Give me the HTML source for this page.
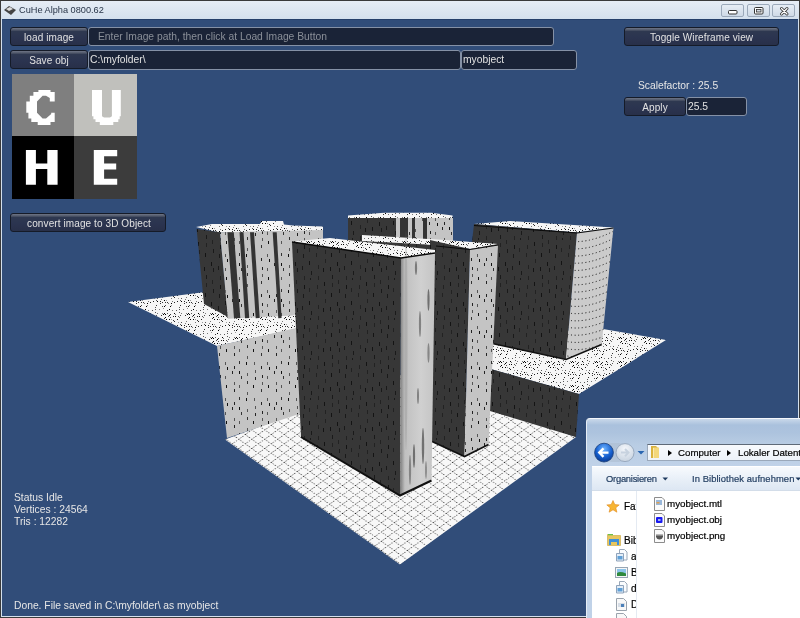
<!DOCTYPE html>
<html><head><meta charset="utf-8">
<style>
html,body{margin:0;padding:0;}
body{width:800px;height:618px;overflow:hidden;position:relative;background:#dfe7f1;font-family:"Liberation Sans",sans-serif;}
.abs{position:absolute;will-change:transform;}
#frame{left:0;top:0;width:798px;height:616px;border:1px solid #3a3a3a;background:linear-gradient(#e6edf5 0,#d4e0ed 18px,#d4e0ed 100%);}
#client{left:2px;top:19px;width:796px;height:597px;background:#314d79;border-top:1px solid #25406a;box-sizing:border-box;}
#title{left:19px;top:5px;font-size:9.2px;color:#283548;}
.cbtn{top:4px;width:23px;height:13px;border:1px solid #9ba9ba;border-radius:2px;background:linear-gradient(#e6edf5,#cfdae7);box-sizing:border-box;}
.btn{border:1px solid #151b28;border-radius:3px;background:linear-gradient(#6f7586 0,#50586a 2px,#2e3850 3.5px,#2b3450 55%,#283049 100%);box-sizing:border-box;color:#e2e2e2;font-size:10px;letter-spacing:0.1px;text-align:center;line-height:17px;padding-top:0.5px;}
.fld{border:1px solid #8591a6;border-radius:3px;background:#1a2337;box-sizing:border-box;color:#e2e2e2;font-size:10.3px;line-height:17px;padding-left:1px;}
.lbl{color:#e6e6e6;font-size:10.3px;white-space:nowrap;}
</style></head><body>
<div id="frame" class="abs"></div>
<div id="client" class="abs"></div>
<!-- title bar -->
<svg class="abs" style="left:3px;top:5px" width="14" height="11" viewBox="0 0 14 11"><path d="M1 5 L6 1 L13 5 L8 10 Z" fill="#444"/><path d="M3 4 L7 2 L10 4 L6 6Z" fill="#ddd"/></svg>
<div id="title" class="abs">CuHe Alpha 0800.62</div>
<div class="abs cbtn" style="left:721px"></div>
<div class="abs cbtn" style="left:747px"></div>
<div class="abs cbtn" style="left:772px"></div>
<svg class="abs" style="left:720px;top:3px" width="80" height="14" viewBox="0 0 80 14">
<rect x="8.5" y="7.5" width="8.5" height="3.5" rx="1" fill="#fff" stroke="#333" stroke-width="1"/>
<rect x="34.5" y="4.5" width="8.5" height="6.5" rx="1" fill="#fff" stroke="#333" stroke-width="1"/><rect x="36.5" y="6.5" width="4.5" height="2.5" fill="#d0d8e2" stroke="#333" stroke-width="0.8"/>
<path d="M61.5 5.5 L67 11 M67 5.5 L61.5 11" stroke="#3a3a3a" stroke-width="3" stroke-linecap="round"/>
<path d="M61.5 5.5 L67 11 M67 5.5 L61.5 11" stroke="#fff" stroke-width="1.2" stroke-linecap="round"/>
</svg>

<!-- UI -->
<div class="abs btn" style="left:10px;top:27px;width:78px;height:19px">load image</div>
<div class="abs fld" style="left:88px;top:27px;width:466px;height:19px;color:#8a8f98;padding-left:9px">Enter Image path, then click at Load Image Button</div>
<div class="abs btn" style="left:10px;top:50px;width:78px;height:19px">Save obj</div>
<div class="abs fld" style="left:88px;top:50px;width:373px;height:20px">C:\myfolder\</div>
<div class="abs fld" style="left:461px;top:50px;width:116px;height:20px">myobject</div>
<div class="abs btn" style="left:624px;top:27px;width:155px;height:19px">Toggle Wireframe view</div>
<div class="abs lbl" style="left:638px;top:80px">Scalefactor : 25.5</div>
<div class="abs btn" style="left:624px;top:97px;width:62px;height:19px">Apply</div>
<div class="abs fld" style="left:686px;top:97px;width:61px;height:19px">25.5</div>
<div class="abs btn" style="left:10px;top:213px;width:156px;height:19px;padding-left:2px">convert image to 3D Object</div>

<div class="abs lbl" style="left:14px;top:492px">Status Idle</div>
<div class="abs lbl" style="left:14px;top:504px">Vertices : 24564</div>
<div class="abs lbl" style="left:14px;top:515.5px">Tris : 12282</div>
<div class="abs lbl" style="left:14px;top:599.5px">Done. File saved in C:\myfolder\ as myobject</div>

<!-- logo -->
<svg class="abs" style="left:12px;top:74px" width="125" height="125" viewBox="0 0 125 125">
<rect x="0" y="0" width="62" height="62" fill="#7f7f7f"/>
<rect x="62" y="0" width="63" height="62" fill="#c0c0bc"/>
<rect x="0" y="62" width="62" height="63" fill="#000"/>
<rect x="62" y="62" width="63" height="63" fill="#3c3c3c"/>
<g fill="#fff">
<path d="M26.4 16.0 L38.5 16.0 L38.5 18.0 L42.7 18.0 L42.7 27.4 L37.8 27.4 L37.8 24.0 L34.0 21.7 L30.6 21.7 L25.0 27.4 L25.0 38.8 L30.6 44.5 L34.0 44.5 L39.2 40.0 L39.2 38.8 L42.7 38.8 L42.7 48.0 L38.5 48.0 L38.5 50.9 L25.7 50.9 L25.7 48.0 L19.3 48.0 L19.3 44.5 L16.4 44.5 L16.4 38.8 L14.3 38.8 L14.3 27.4 L17.8 27.4 L17.8 21.7 L21.4 21.7 L21.4 18.0 L26.4 18.0Z"/>
<path d="M80.0 16.0 L90.0 16.0 L90.0 42.3 L92.0 43.4 L98.0 43.4 L99.9 42.3 L99.9 16.0 L108.8 16.0 L108.8 42.3 L107.7 42.3 L107.7 45.2 L106.3 45.2 L106.3 48.0 L101.3 48.0 L101.3 50.9 L87.8 50.9 L87.8 48.0 L83.5 48.0 L83.5 45.2 L81.4 45.2 L81.4 42.3 L80.0 42.3Z"/>
<path d="M13.9 75.9 L23.9 75.9 L23.9 89.4 L35.3 89.4 L35.3 75.9 L45.6 75.9 L45.6 110.8 L35.3 110.8 L35.3 95.1 L23.9 95.1 L23.9 110.8 L13.9 110.8Z"/>
<path d="M81.8 75.9 L105.2 75.9 L105.2 82.3 L92.1 82.3 L92.1 89.4 L104.2 89.4 L104.2 95.5 L92.1 95.5 L92.1 104.7 L105.2 104.7 L105.2 110.8 L81.8 110.8Z"/>
</g>
</svg>

<!-- 3D scene -->
<svg id="scene" class="abs" style="left:0;top:0" width="800" height="618" viewBox="0 0 800 618"><defs>
<pattern id="ptop" width="24" height="24" patternUnits="userSpaceOnUse"><rect width="24" height="24" fill="#f6f6f6"/><rect x="10" y="4" width="1" height="1" fill="#555"/><rect x="20" y="1" width="1" height="1" fill="#000"/><rect x="17" y="3" width="1" height="1" fill="#333"/><rect x="18" y="1" width="1" height="1" fill="#777"/><rect x="6" y="1" width="1" height="1" fill="#000"/><rect x="13" y="13" width="1" height="1" fill="#000"/><rect x="7" y="2" width="1" height="1" fill="#777"/><rect x="13" y="1" width="1" height="1" fill="#777"/><rect x="3" y="7" width="1" height="1" fill="#999"/><rect x="20" y="18" width="1" height="1" fill="#000"/><rect x="18" y="18" width="1" height="1" fill="#555"/><rect x="1" y="7" width="1" height="1" fill="#000"/><rect x="9" y="13" width="1" height="1" fill="#222"/><rect x="18" y="9" width="1" height="1" fill="#777"/><rect x="21" y="5" width="1" height="1" fill="#000"/><rect x="20" y="6" width="1" height="1" fill="#333"/><rect x="3" y="17" width="1" height="1" fill="#999"/><rect x="2" y="18" width="1" height="1" fill="#000"/><rect x="15" y="21" width="1" height="1" fill="#777"/><rect x="13" y="10" width="1" height="1" fill="#555"/><rect x="18" y="14" width="1" height="1" fill="#333"/><rect x="9" y="7" width="1" height="1" fill="#222"/><rect x="22" y="7" width="1" height="1" fill="#000"/><rect x="16" y="15" width="1" height="1" fill="#333"/><rect x="23" y="14" width="1" height="1" fill="#333"/><rect x="19" y="2" width="1" height="1" fill="#000"/><rect x="16" y="13" width="1" height="1" fill="#222"/><rect x="1" y="21" width="1" height="1" fill="#000"/><rect x="10" y="10" width="1" height="1" fill="#999"/><rect x="11" y="19" width="1" height="1" fill="#555"/><rect x="2" y="2" width="1" height="1" fill="#333"/><rect x="21" y="2" width="1" height="1" fill="#000"/><rect x="23" y="22" width="1" height="1" fill="#333"/><rect x="21" y="14" width="1" height="1" fill="#333"/><rect x="22" y="12" width="1" height="1" fill="#999"/><rect x="11" y="0" width="1" height="1" fill="#555"/><rect x="11" y="5" width="1" height="1" fill="#777"/><rect x="3" y="15" width="1" height="1" fill="#000"/><rect x="6" y="9" width="1" height="1" fill="#222"/><rect x="12" y="12" width="1" height="1" fill="#555"/><rect x="2" y="5" width="1" height="1" fill="#555"/><rect x="12" y="17" width="1" height="1" fill="#333"/><rect x="4" y="13" width="1" height="1" fill="#777"/><rect x="8" y="22" width="1" height="1" fill="#555"/><rect x="11" y="21" width="1" height="1" fill="#555"/><rect x="7" y="4" width="1" height="1" fill="#000"/><rect x="5" y="4" width="1" height="1" fill="#222"/><rect x="0" y="15" width="1" height="1" fill="#777"/><rect x="5" y="8" width="1" height="1" fill="#333"/><rect x="0" y="4" width="1" height="1" fill="#555"/><rect x="17" y="11" width="1" height="1" fill="#777"/><rect x="4" y="22" width="1" height="1" fill="#777"/><rect x="19" y="20" width="1" height="1" fill="#999"/><rect x="23" y="1" width="1" height="1" fill="#555"/><rect x="21" y="17" width="1" height="1" fill="#555"/><rect x="12" y="3" width="1" height="1" fill="#555"/><rect x="20" y="12" width="1" height="1" fill="#000"/><rect x="6" y="14" width="1" height="1" fill="#222"/><rect x="3" y="10" width="1" height="1" fill="#777"/><rect x="1" y="3" width="1" height="1" fill="#000"/></pattern>
<pattern id="plight" width="42" height="36" patternUnits="userSpaceOnUse"><rect width="42" height="36" fill="#c4c4c4"/><rect x="2" y="2" width="1" height="3" fill="#555"/><rect x="9" y="6" width="1" height="3" fill="#222"/><rect x="15" y="2" width="1" height="3" fill="#555"/><rect x="24" y="6" width="1" height="3" fill="#222"/><rect x="29" y="1" width="1" height="3" fill="#333"/><rect x="36" y="2" width="1" height="3" fill="#111"/><rect x="3" y="10" width="1" height="3" fill="#555"/><rect x="10" y="15" width="1" height="3" fill="#222"/><rect x="17" y="7" width="1" height="3" fill="#111"/><rect x="22" y="11" width="1" height="3" fill="#222"/><rect x="29" y="11" width="1" height="3" fill="#111"/><rect x="37" y="13" width="1" height="3" fill="#555"/><rect x="3" y="17" width="1" height="3" fill="#222"/><rect x="10" y="22" width="1" height="3" fill="#555"/><rect x="15" y="16" width="1" height="3" fill="#555"/><rect x="24" y="22" width="1" height="3" fill="#555"/><rect x="31" y="16" width="1" height="3" fill="#333"/><rect x="37" y="21" width="1" height="3" fill="#333"/><rect x="1" y="25" width="1" height="3" fill="#111"/><rect x="9" y="29" width="1" height="3" fill="#333"/><rect x="16" y="25" width="1" height="3" fill="#111"/><rect x="24" y="29" width="1" height="3" fill="#222"/><rect x="29" y="25" width="1" height="3" fill="#555"/><rect x="37" y="32" width="1" height="3" fill="#555"/></pattern>
<pattern id="plight2" width="4" height="7" patternUnits="userSpaceOnUse" patternTransform="skewY(-14)"><rect width="4" height="7" fill="#cacaca"/><rect x="2" y="3" width="1" height="1" fill="#222"/></pattern>
<pattern id="pdark" width="42" height="40" patternUnits="userSpaceOnUse"><rect width="42" height="40" fill="#373737"/><rect x="2" y="0" width="1" height="4" fill="#222"/><rect x="10" y="5" width="1" height="4" fill="#141414"/><rect x="16" y="38" width="1" height="4" fill="#1a1a1a"/><rect x="23" y="5" width="1" height="4" fill="#222"/><rect x="30" y="2" width="1" height="4" fill="#141414"/><rect x="38" y="3" width="1" height="4" fill="#222"/><rect x="3" y="9" width="1" height="4" fill="#1a1a1a"/><rect x="9" y="14" width="1" height="4" fill="#1a1a1a"/><rect x="15" y="8" width="1" height="4" fill="#222"/><rect x="22" y="13" width="1" height="4" fill="#222"/><rect x="31" y="10" width="1" height="4" fill="#222"/><rect x="37" y="13" width="1" height="4" fill="#141414"/><rect x="1" y="22" width="1" height="4" fill="#141414"/><rect x="8" y="26" width="1" height="4" fill="#1a1a1a"/><rect x="15" y="21" width="1" height="4" fill="#141414"/><rect x="24" y="25" width="1" height="4" fill="#222"/><rect x="31" y="19" width="1" height="4" fill="#222"/><rect x="36" y="27" width="1" height="4" fill="#141414"/><rect x="3" y="28" width="1" height="4" fill="#1a1a1a"/><rect x="10" y="36" width="1" height="4" fill="#222"/><rect x="17" y="31" width="1" height="4" fill="#1a1a1a"/><rect x="24" y="36" width="1" height="4" fill="#222"/><rect x="29" y="28" width="1" height="4" fill="#141414"/><rect x="38" y="35" width="1" height="4" fill="#1a1a1a"/></pattern>
<pattern id="pfloor" width="8" height="8" patternUnits="userSpaceOnUse" patternTransform="matrix(0.81,-0.58,0.81,0.58,400,564.5)"><rect width="8" height="8" fill="#f8f8f8"/>
<rect x="0" y="0" width="1.2" height="1" fill="#111"/><rect x="2.5" y="0" width="1.1" height="0.9" fill="#444"/><rect x="5" y="0" width="1.1" height="0.9" fill="#333"/><rect x="0" y="2.5" width="0.9" height="1.1" fill="#444"/><rect x="0" y="5" width="0.9" height="1.1" fill="#333"/></pattern>
<linearGradient id="gBr" x1="0" y1="0" x2="1" y2="0"><stop offset="0" stop-color="#7a7a7a"/><stop offset="0.14" stop-color="#c0c0c0"/><stop offset="0.6" stop-color="#d0d0d0"/><stop offset="1" stop-color="#c4c4c4"/></linearGradient>
<linearGradient id="gEr" x1="0" y1="0" x2="1" y2="0"><stop offset="0" stop-color="#c0c0c0"/><stop offset="0.5" stop-color="#d2d2d2"/><stop offset="1" stop-color="#cdcdcd"/></linearGradient>
</defs>
<polygon points="225,439.5 400,564.5 576,437 400,375" fill="url(#pfloor)" />
<polygon points="128,302 205,292 305,280 305,327 217,346" fill="url(#ptop)" />
<polygon points="217,346 305,326 305,412 227,438" fill="url(#plight)" />
<polygon points="666,340 579,394 480,366 480,335 603,329" fill="url(#ptop)" />
<polygon points="480,366 579,394 576,437 480,408" fill="url(#pdark)" />
<polygon points="196,227 212,224 260,224 261,221 283,221 284,224.5 293,225.5 323,226.5 323,231 219,232.5" fill="url(#ptop)" />
<polygon points="196.6,229 220,232.3 228,317 204,304" fill="url(#pdark)" />
<polygon points="220,232.3 323,230 323,300 293,315.6 228,318.8" fill="url(#plight)" />
<polygon points="227.4,232.3 233.8,232.2 240.3,318 234,318.2" fill="#343434" />
<polygon points="239.5,232.3 243.5,232.2 249.2,318 245,318.2" fill="#343434" />
<polygon points="250,232.3 254,232.2 259.7,318 255.7,318.2" fill="#343434" />
<polygon points="272.7,232.3 276.7,232.2 281.6,318 278.3,318.2" fill="#343434" />
<polygon points="348,215.4 384.6,212.7 431.4,212.7 452.6,215.4 452.6,219 348,219" fill="url(#ptop)" />
<polygon points="348,218 453,218 453,246 348,246" fill="url(#plight)" />
<polygon points="348,218 396,218 396,246 348,246" fill="url(#pdark)" />
<rect x="400" y="218" width="8" height="28" fill="#343434"/>
<rect x="412" y="218" width="3" height="28" fill="#343434"/>
<rect x="423" y="218" width="4" height="28" fill="#343434"/>
<polygon points="474,224 510,221 613.5,227.5 577,232.5" fill="url(#ptop)" />
<polygon points="474,224 577,232.5 566,359.5 490,343 470,260" fill="url(#pdark)" />
<clipPath id="cE"><polygon points="577,232.5 613.5,227.5 601.7,344.4 566,359.5"/></clipPath>
<polygon points="577,232.5 613.5,227.5 601.7,344.4 566,359.5" fill="#cbcbcb" />
<g clip-path="url(#cE)"><path d="M564 240.0 Q585 246.0 616 230.0" fill="none" stroke="#111" stroke-width="1" stroke-dasharray="1 2.6"/><path d="M564 247.2 Q585 253.2 616 237.2" fill="none" stroke="#111" stroke-width="1" stroke-dasharray="1 2.6"/><path d="M564 254.4 Q585 260.4 616 244.4" fill="none" stroke="#111" stroke-width="1" stroke-dasharray="1 2.6"/><path d="M564 261.6 Q585 267.6 616 251.6" fill="none" stroke="#111" stroke-width="1" stroke-dasharray="1 2.6"/><path d="M564 268.8 Q585 274.8 616 258.8" fill="none" stroke="#111" stroke-width="1" stroke-dasharray="1 2.6"/><path d="M564 276.0 Q585 282.0 616 266.0" fill="none" stroke="#111" stroke-width="1" stroke-dasharray="1 2.6"/><path d="M564 283.2 Q585 289.2 616 273.2" fill="none" stroke="#111" stroke-width="1" stroke-dasharray="1 2.6"/><path d="M564 290.4 Q585 296.4 616 280.4" fill="none" stroke="#111" stroke-width="1" stroke-dasharray="1 2.6"/><path d="M564 297.6 Q585 303.6 616 287.6" fill="none" stroke="#111" stroke-width="1" stroke-dasharray="1 2.6"/><path d="M564 304.8 Q585 310.8 616 294.8" fill="none" stroke="#111" stroke-width="1" stroke-dasharray="1 2.6"/><path d="M564 312.0 Q585 318.0 616 302.0" fill="none" stroke="#111" stroke-width="1" stroke-dasharray="1 2.6"/><path d="M564 319.2 Q585 325.2 616 309.2" fill="none" stroke="#111" stroke-width="1" stroke-dasharray="1 2.6"/><path d="M564 326.4 Q585 332.4 616 316.4" fill="none" stroke="#111" stroke-width="1" stroke-dasharray="1 2.6"/><path d="M564 333.6 Q585 339.6 616 323.6" fill="none" stroke="#111" stroke-width="1" stroke-dasharray="1 2.6"/><path d="M564 340.8 Q585 346.8 616 330.8" fill="none" stroke="#111" stroke-width="1" stroke-dasharray="1 2.6"/><path d="M564 348.0 Q585 354.0 616 338.0" fill="none" stroke="#111" stroke-width="1" stroke-dasharray="1 2.6"/><path d="M564 355.2 Q585 361.2 616 345.2" fill="none" stroke="#111" stroke-width="1" stroke-dasharray="1 2.6"/><path d="M564 362.4 Q585 368.4 616 352.4" fill="none" stroke="#111" stroke-width="1" stroke-dasharray="1 2.6"/><path d="M564 369.6 Q585 375.6 616 359.6" fill="none" stroke="#111" stroke-width="1" stroke-dasharray="1 2.6"/></g>
<polyline points="474,225.5 577,233 613.5,228" fill="none" stroke="#0a0a0a" stroke-width="1.2"/>
<polyline points="490,343 566,359.5 601.7,344.4" fill="none" stroke="#111" stroke-width="1.6"/>
<polygon points="362,238 470,249 470,262 362,252" fill="url(#pdark)" />
<polygon points="362,235 445,240 498.3,244 470,249 445,245.5 362,241" fill="url(#ptop)" />
<polygon points="430,240 470,249 464.5,456.5 431,441" fill="url(#pdark)" />
<polygon points="470,249 498,245 488.5,444.5 464.5,456.5" fill="url(#plight)" />
<polyline points="436,246 470,249.5 498.3,245" fill="none" stroke="#0a0a0a" stroke-width="1.2"/>
<polyline points="431,441 464.5,456.5 488.5,444.5" fill="none" stroke="#111" stroke-width="1.6"/>
<polygon points="292,241.5 330,238 365,242 435,250 435,253 401,258" fill="url(#ptop)" />
<polygon points="292,242 401,258 400,495.5 301,437" fill="url(#pdark)" />
<polygon points="401,258 435,253 431.5,480.5 400,495.5" fill="url(#gBr)" />
<ellipse cx="416" cy="268" rx="1.1" ry="7" fill="#444" opacity="0.6"/>
<ellipse cx="428.5" cy="300" rx="1.1" ry="11" fill="#333" opacity="0.6"/>
<ellipse cx="420" cy="324" rx="1.1" ry="13" fill="#444" opacity="0.55"/>
<ellipse cx="428.5" cy="353" rx="1.1" ry="10" fill="#444" opacity="0.5"/>
<ellipse cx="418" cy="396" rx="1" ry="8" fill="#444" opacity="0.55"/>
<ellipse cx="414" cy="456" rx="1.1" ry="12" fill="#333" opacity="0.6"/>
<ellipse cx="423" cy="446" rx="1.2" ry="18" fill="#333" opacity="0.6"/>
<ellipse cx="406" cy="340" rx="1.5" ry="110" fill="#777" opacity="0.25"/>
<ellipse cx="410" cy="470" rx="1.1" ry="15" fill="#444" opacity="0.5"/>
<ellipse cx="426" cy="470" rx="0.9" ry="9" fill="#444" opacity="0.5"/>
<polyline points="301,437 400,495.5 431.5,480.5" fill="none" stroke="#111" stroke-width="2"/>
<polyline points="292,242 401,258 435,253" fill="none" stroke="#0a0a0a" stroke-width="1.3"/></svg>


<!-- explorer -->
<div class="abs" style="left:586px;top:418px;width:214px;height:200px;border-radius:4px 0 0 0;background:linear-gradient(#c9d8ea 0,#aac1dd 6px,#adc3de 14px,#b9cde4 26px,#c0d2e8 48px);border-top:1px solid #f4f7fb;border-left:1px solid #e6edf5;box-sizing:border-box;"></div>
<div class="abs" style="left:592px;top:466px;width:208px;height:152px;background:#fff;"></div>
<div class="abs" style="left:592px;top:467px;width:208px;height:24px;background:linear-gradient(#f7fafd,#e9f0f8 50%,#dde7f3);border-bottom:1px solid #d3dde9;box-sizing:border-box;"></div>
<div class="abs" style="left:636px;top:491px;width:1px;height:127px;background:#e4eaf2;"></div>
<svg class="abs" style="left:592px;top:440px" width="70" height="26" viewBox="0 0 70 26">
<defs>
<radialGradient id="gb" cx="0.5" cy="0.3" r="0.7"><stop offset="0" stop-color="#6fb4ff"/><stop offset="0.6" stop-color="#1660d0"/><stop offset="1" stop-color="#0a3a90"/></radialGradient>
<radialGradient id="gg" cx="0.5" cy="0.3" r="0.7"><stop offset="0" stop-color="#f4f7fb"/><stop offset="1" stop-color="#c8d3e0"/></radialGradient>
</defs>
<rect x="10" y="3" width="26" height="19" rx="9.5" fill="#a9b9cc" opacity="0.5"/>
<circle cx="33" cy="12.6" r="9" fill="url(#gg)" stroke="#8fa0b5" stroke-width="0.8"/>
<path d="M29 12.6 h8 M33 9 l3.5 3.6 l-3.5 3.6" stroke="#c7d2df" stroke-width="2" fill="none"/>
<circle cx="12" cy="12.6" r="9.4" fill="url(#gb)" stroke="#1b3f7a" stroke-width="0.8"/>
<path d="M16.5 12.6 h-9 M11.5 8.4 l-4.2 4.2 l4.2 4.2" stroke="#fff" stroke-width="2.4" fill="none"/>
<path d="M45.5 11 h7 l-3.5 3.5z" fill="#2a66b0"/>
</svg>
<div class="abs" style="left:647px;top:444px;width:153px;height:17px;border:1px solid #9aa8ba;border-top-color:#5f6a78;border-right:none;background:linear-gradient(#f8fafd,#eef3f9);box-sizing:border-box;"></div>
<svg class="abs" style="left:649px;top:445px" width="14" height="14" viewBox="0 0 14 14"><path d="M2 1 h5 l2 2 v10 h-7z" fill="#d9b23e"/><path d="M4 2.5 h6 v10.5 h-6z" fill="#f3d77a"/><path d="M4.5 3 v10" stroke="#fbeab0" stroke-width="1"/></svg>
<svg class="abs" style="left:668px;top:449px" width="5" height="8" viewBox="0 0 5 8"><path d="M0 1 L4 4 L0 7Z" fill="#000"/></svg>
<div class="abs" style="left:678px;top:446.5px;font-size:9.7px;color:#000;-webkit-text-stroke:0.2px #000;white-space:nowrap">Computer</div>
<svg class="abs" style="left:727px;top:449px" width="5" height="8" viewBox="0 0 5 8"><path d="M0 1 L4 4 L0 7Z" fill="#000"/></svg>
<div class="abs" style="left:738px;top:446.5px;font-size:9.7px;color:#000;-webkit-text-stroke:0.2px #000;white-space:nowrap">Lokaler Datentr</div>
<div class="abs" style="left:606px;top:472.5px;font-size:9.4px;letter-spacing:-0.25px;color:#1e3a5e;-webkit-text-stroke:0.2px #1e3a5e;white-space:nowrap">Organisieren</div>
<svg class="abs" style="left:662px;top:477px" width="7" height="4" viewBox="0 0 7 4"><path d="M0.5 0.5 H6 L3.25 3.5Z" fill="#1e3a5e"/></svg>
<div class="abs" style="left:692px;top:472.5px;font-size:9.4px;letter-spacing:0.08px;color:#1e3a5e;-webkit-text-stroke:0.2px #1e3a5e;white-space:nowrap">In Bibliothek aufnehmen</div>
<svg class="abs" style="left:795px;top:477px" width="7" height="4" viewBox="0 0 7 4"><path d="M0.5 0.5 H6 L3.25 3.5Z" fill="#1e3a5e"/></svg>
<svg class="abs" style="left:606px;top:500px" width="14" height="13" viewBox="0 0 14 13"><path d="M7 0.5 L8.8 4.6 L13.2 4.9 L9.8 7.8 L10.9 12.2 L7 9.8 L3.1 12.2 L4.2 7.8 L0.8 4.9 L5.2 4.6Z" fill="#f7b533" stroke="#e08a1e" stroke-width="0.6"/></svg>
<div class="abs" style="left:624px;top:501px;width:12px;overflow:hidden;font-size:10px;color:#000;-webkit-text-stroke:0.2px #000">Fav</div>
<svg class="abs" style="left:607px;top:533px" width="14" height="13" viewBox="0 0 14 13"><path d="M0.5 1.5 h5 l1 1 h7 v10 h-13z" fill="#e7c65e" stroke="#c9a43c" stroke-width="0.6"/><rect x="1" y="1" width="5" height="1.3" fill="#6cbf4a"/><path d="M2 6 h10 v6 h-2 v-3 h-6 v3 h-2z" fill="#3f8fd8"/></svg>
<div class="abs" style="left:624px;top:534.5px;width:12px;overflow:hidden;font-size:10px;color:#000;-webkit-text-stroke:0.2px #000">Bib</div>
<svg class="abs" style="left:615px;top:549px" width="13" height="13" viewBox="0 0 13 13"><path d="M4.5 0.5 h5 l2.5 2.5 v8 h-7.5z" fill="#fafcfe" stroke="#9aa8b8"/><path d="M1.5 4.5 h7 v7.5 h-7z" fill="#e4eef8" stroke="#8fa3bb"/><rect x="2.5" y="7" width="5" height="3.5" fill="#5f9fd6"/></svg>
<div class="abs" style="left:631px;top:551px;width:5px;overflow:hidden;font-size:10px;color:#000;-webkit-text-stroke:0.2px #000">a</div>
<svg class="abs" style="left:615px;top:567px" width="13" height="11" viewBox="0 0 13 11"><rect x="0.5" y="0.5" width="12" height="10" fill="#f4f6f8" stroke="#98a6b4"/><rect x="2" y="2" width="9" height="7" fill="#8cc4ea"/><path d="M2 6 Q5 4 11 6.5 V9 H2Z" fill="#2f8a3e"/></svg>
<div class="abs" style="left:631px;top:567px;width:5px;overflow:hidden;font-size:10px;color:#000;-webkit-text-stroke:0.2px #000">B</div>
<svg class="abs" style="left:615px;top:581px" width="13" height="13" viewBox="0 0 13 13"><path d="M4.5 0.5 h5 l2.5 2.5 v8 h-7.5z" fill="#fafcfe" stroke="#9aa8b8"/><path d="M1.5 4.5 h7 v7.5 h-7z" fill="#e4eef8" stroke="#8fa3bb"/><rect x="2.5" y="7" width="5" height="3.5" fill="#5f9fd6"/></svg>
<div class="abs" style="left:631px;top:583px;width:5px;overflow:hidden;font-size:10px;color:#000;-webkit-text-stroke:0.2px #000">d</div>
<svg class="abs" style="left:616px;top:598px" width="11" height="13" viewBox="0 0 11 13"><path d="M0.5 0.5 h7 l3 3 v9 h-10z" fill="#f8f8f8" stroke="#9aa3ad"/><rect x="2" y="5" width="7" height="4" fill="#d6dde6"/><rect x="5" y="6" width="3" height="3" fill="#4a7fb8"/></svg>
<div class="abs" style="left:631px;top:599px;width:5px;overflow:hidden;font-size:10px;color:#000;-webkit-text-stroke:0.2px #000">D</div>
<svg class="abs" style="left:616px;top:613px" width="11" height="6" viewBox="0 0 11 6"><path d="M0.5 0.5 h7 l3 3 v3 h-10z" fill="#f8f8f8" stroke="#9aa3ad"/></svg>
<svg class="abs" style="left:654px;top:497px" width="11" height="14" viewBox="0 0 11 14"><path d="M0.5 0.5 h7.5 l2.5 2.5 v10.5 h-10z" fill="#fbfbfb" stroke="#8c8c8c"/><rect x="2" y="3" width="6" height="5" fill="#9ab8da"/><rect x="2.5" y="5" width="3" height="1.5" fill="#e0a050"/></svg>
<svg class="abs" style="left:654px;top:513px" width="11" height="14" viewBox="0 0 11 14"><path d="M0.5 0.5 h7.5 l2.5 2.5 v10.5 h-10z" fill="#fbfbfb" stroke="#8c8c8c"/><rect x="2" y="4" width="6.5" height="6" rx="1" fill="#1a1af0"/><rect x="4" y="6" width="2.5" height="2" fill="#9fb0e8"/></svg>
<svg class="abs" style="left:654px;top:529px" width="11" height="14" viewBox="0 0 11 14"><path d="M0.5 0.5 h7.5 l2.5 2.5 v10.5 h-10z" fill="#fbfbfb" stroke="#8c8c8c"/><path d="M2 6 h7 v1.5 q-0.5 3 -3.5 3 q-3 0 -3.5 -3z" fill="#555"/><rect x="2" y="5" width="7" height="1.5" fill="#bbb"/></svg>
<div class="abs" style="left:667px;top:498px;font-size:9.8px;color:#000;-webkit-text-stroke:0.2px #000;white-space:nowrap">myobject.mtl</div>
<div class="abs" style="left:667px;top:514px;font-size:9.8px;color:#000;-webkit-text-stroke:0.2px #000;white-space:nowrap">myobject.obj</div>
<div class="abs" style="left:667px;top:530px;font-size:9.8px;color:#000;-webkit-text-stroke:0.2px #000;white-space:nowrap">myobject.png</div>

</body></html>
